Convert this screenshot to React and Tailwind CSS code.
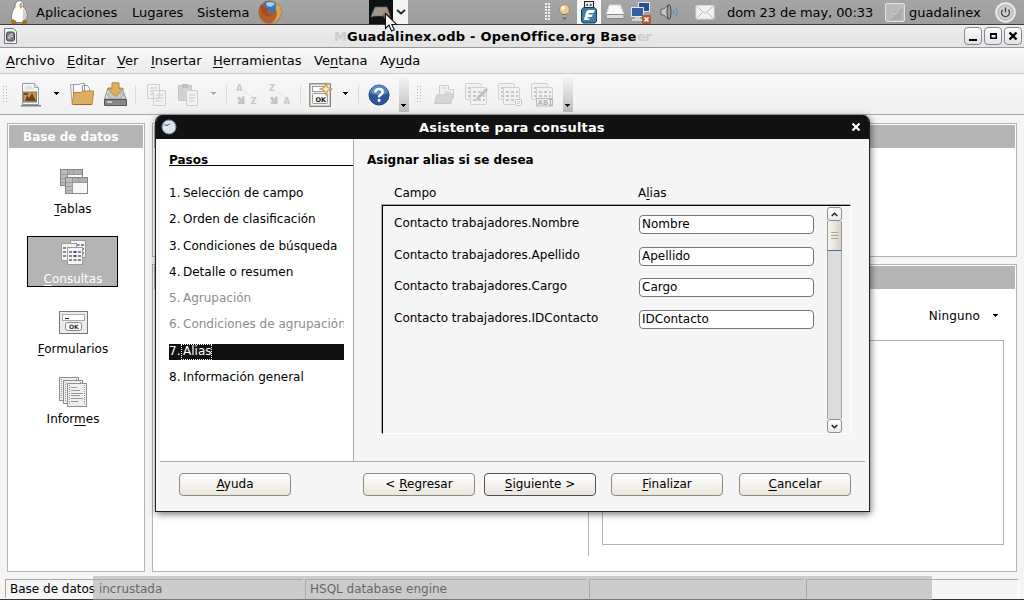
import React from "react";

function Mn({ t, i = -1 }) {
  if (i < 0) return <>{t}</>;
  return (
    <>
      {t.slice(0, i)}
      <span className="underline decoration-1 underline-offset-2">{t[i]}</span>
      {t.slice(i + 1)}
    </>
  );
}

function Arrow({ className = "", fill = "#000" }) {
  return (
    <svg className={"shrink-0 " + className} width="7" height="4" viewBox="0 0 7 4" shapeRendering="crispEdges">
      <path d="M1 0h5v1h-1v1h-1v1h-1v-1h-1v-1h-1z" fill={fill} />
    </svg>
  );
}

function Grip({ className = "" }) {
  return (
    <svg className={"shrink-0 " + className} width="5" height="17" viewBox="0 0 5 17" shapeRendering="crispEdges">
      {[0, 3, 6, 9, 12, 15].map((y) => (
        <g key={y} fill="#b4b4b4">
          <rect x="0" y={y} width="1" height="1" />
          <rect x="3" y={y} width="1" height="1" />
        </g>
      ))}
    </svg>
  );
}

const Sep = ({ className = "" }) => <div className={"h-[19px] w-px shrink-0 bg-[#dadada] " + className} />;

const Overflow = ({ className = "" }) => (
  <div className={"mt-[3px] flex h-[34px] w-[10px] shrink-0 items-end justify-start self-start bg-linear-to-b from-[#f3f3f3] to-[#bdbdbd] pb-[4px] pl-px " + className}>
    <Arrow />
  </div>
);

function Table({ x, y, w = 16, h = 17 }) {
  return (
    <g>
      <rect x={x + 0.5} y={y + 0.5} width={w} height={h} rx="1" fill="#f1f1f1" stroke="#d0d0d0" />
      <path d={`M${x + 3} ${y + 5}h3m2 0h3m2 0h2M${x + 3} ${y + 9}h3m2 0h3m2 0h2M${x + 3} ${y + 13}h3m2 0h3m2 0h2`} stroke="#c6c6c6" strokeWidth="2" />
    </g>
  );
}

function TopPanel() {
  return (
    <div className="flex h-[25px] shrink-0 items-center border-b border-[#3c3c3c] bg-linear-to-b from-[#a6a6a6] to-[#9c9c9c] text-black">
      <svg className="ml-[10px] shrink-0" width="18" height="24" viewBox="0 0 18 24">
        <path d="M9.500 .8C6 .8 5 4 5 7 2 11 .8 16 2 20l4 2.500h7l3-2.500c2-4 1-9-2.500-13 0-3-.5-6.200-4-6.200z" fill="#fdfdfd" stroke="#777" strokeWidth=".9" />
        <path d="M13 8c3 4 4 9 2.500 12L13 21z" fill="#cfcfcf" />
        <path d="M.5 21.500c2-3 4-2.500 6.500 1l-1 1.500H2zM17.500 21.500c-2-3-4-2.500-6 1l1 1.500h4z" fill="#a8741f" />
        <path d="M9 4.500l4.500 1.500-3 3z" fill="#d99b35" />
        <circle cx="11" cy="4" r=".8" fill="#333" />
      </svg>
      <span className="ml-[8px] w-[96px] shrink-0">Aplicaciones</span>
      <span className="w-[65px] shrink-0">Lugares</span>
      <span className="w-[60px] shrink-0">Sistema</span>
      <svg className="shrink-0" width="25" height="24" viewBox="0 0 25 24">
        <circle cx="13" cy="12" r="11.500" fill="#b05f2c" />
        <path d="M14 .5c7 1 11 7 10 13-1 5-5 9-10 10 5-4 7-8 5-14z" fill="#dca44e" />
        <path d="M6 4c3-3 9-4 13-1 1 4-1 9-4 11-2-1-2-3-4-4-1-3-4-3-5-6z" fill="#3b78b5" />
        <path d="M9 3c4-2 7-1 9 1l-4 3-4-1z" fill="#9fd0ec" />
        <path d="M3 6c3-1 5 0 6 2l3 1-2 4 5 2c-2 2-6 2-8-1-2-2-3-5-4-8z" fill="#a34f24" />
      </svg>
      <div className="ml-[87px] flex h-[24px] w-[39px] shrink-0">
        <div className="flex w-[24px] items-center justify-center bg-[#111]">
          <svg width="22" height="16" viewBox="0 0 22 16">
            <path d="M5 3h12l3 8-3 1H5l-4 1 1-3z" fill="#9c9b8b" stroke="#59658a" strokeWidth=".7" />
            <path d="M12 10l5-1 4 4-6 2z" fill="#b05a2c" />
          </svg>
        </div>
        <div className="flex flex-1 items-center justify-center bg-[#f5f5f2]">
          <svg width="10" height="6" viewBox="0 0 10 6"><path d="M1 1l4 3.500 4-3.500" fill="none" stroke="#222" strokeWidth="1.700" /></svg>
        </div>
      </div>
      <svg className="ml-[137px] shrink-0" width="5" height="18" viewBox="0 0 5 18" shapeRendering="crispEdges">
        {[0, 3, 6, 9, 12, 15].map((y) => (
          <g key={y} fill="#f3f3f3"><rect x="0" y={y} width="2" height="2" /><rect x="3" y={y} width="2" height="2" /></g>
        ))}
      </svg>
      <svg className="ml-[8px] shrink-0" width="13" height="18" viewBox="0 0 13 18">
        <circle cx="6.500" cy="6.500" r="5" fill="#e6ce94" stroke="#a88d50" />
        <circle cx="5" cy="5" r="2" fill="#fff6d8" />
        <path d="M4.500 11h4v4L7.500 17h-2l-1-2z" fill="#777" />
        <path d="M4.500 13h4" stroke="#ddd" />
      </svg>
      <div className="ml-[6px] flex h-[24px] w-[24px] shrink-0 items-center justify-center bg-[#f8f8f8]">
        <svg width="18" height="24" viewBox="0 0 18 24">
          <rect x="4.500" y="1.500" width="9" height="7" fill="#e4e4e4" stroke="#222" />
          <path d="M6.500 4h1.500v2H6.500zM10 4h1.500v2H10z" fill="#444" />
          <path d="M3.500 7.500h11l2 2.500v11l-1.500 2h-12l-1.500-2V10z" fill="#3f7da6" stroke="#14384f" />
          <path d="M4 20l2-8 2-2h7l-1.500 3H9l-.5 1.500h4.500L11.500 17H8l-.8 1.500h3L8.500 20z" fill="#fff" />
        </svg>
      </div>
      <svg className="ml-[4px] shrink-0" width="20" height="18" viewBox="0 0 20 18">
        <path d="M4.500 2h11L19 12H1z" fill="#f7f7f7" stroke="#d5d5d5" />
        <rect x="1" y="11.500" width="18" height="4" rx="1" fill="#ddd" stroke="#777" strokeWidth=".8" />
      </svg>
      <svg className="ml-[5px] shrink-0" width="22" height="23" viewBox="0 0 22 23">
        <rect x="8.500" y="1.500" width="11" height="9" fill="#244f93" stroke="#e5e5e5" />
        <rect x="1.500" y="6.500" width="12" height="9" fill="#315fa5" stroke="#e5e5e5" />
        <path d="M2 19h10M5 17h5" stroke="#e5e5e5" strokeWidth="1.500" />
        <rect x="12" y="14" width="9" height="9" rx="1" fill="#b45a35" />
        <path d="M14.500 16.500l4 4m0-4l-4 4" stroke="#fff" strokeWidth="1.600" />
      </svg>
      <svg className="ml-[8px] shrink-0" width="20" height="18" viewBox="0 0 20 18">
        <path d="M1 6h3l4-4v14l-4-4H1z" fill="#c8c8c8" stroke="#666" />
        <ellipse cx="9" cy="9" rx="2" ry="7.500" fill="#999" stroke="#444" />
        <path d="M13 6.500q2 2.500 0 5M15.500 4.500q3.500 4.500 0 9" fill="none" stroke="#5c8fc0" strokeWidth="1.200" />
      </svg>
      <svg className="ml-[15px] shrink-0" width="20" height="15" viewBox="0 0 20 15">
        <rect x="1" y=".5" width="18" height="13.500" rx="1" fill="#f2f2f2" stroke="#dcdcdc" />
        <path d="M1.500 1l8.500 7.500L18.500 1M1.500 13.500l6-6m11 6l-6-6" fill="none" stroke="#bbb" />
      </svg>
      <span className="ml-[12px] w-[159px] shrink-0 tracking-[-0.1px]">dom 23 de may, 00:33</span>
      <svg className="-ml-px shrink-0" width="20" height="19" viewBox="0 0 20 19">
        <rect x=".5" y=".5" width="19" height="18" rx="1.500" fill="#b9bcbc" stroke="#e1e1e1" />
        <path d="M2 17L17 3v14z" fill="#a9adac" />
        <path d="M3 17l4-3 2-3 3-1 2-4 4-3" fill="none" stroke="#d3d4c8" />
      </svg>
      <span className="ml-[4px] w-[86px] shrink-0">guadalinex</span>
      <svg className="shrink-0" width="21" height="21" viewBox="0 0 21 21">
        <circle cx="10.500" cy="10.500" r="9.700" fill="#d6d6d6" stroke="#f5f5f5" strokeWidth="1.200" />
        <circle cx="10.500" cy="10.500" r="7.500" fill="#cdcdcd" stroke="#aaa" strokeWidth=".7" />
        <path d="M7.700 7.700a4 4 0 1 0 5.600 0M10.500 5.500v5" fill="none" stroke="#444" strokeWidth="1.300" />
      </svg>
    </div>
  );
}

function WinBtn({ children }) {
  return (
    <div className="flex size-[18px] items-center justify-center rounded-[4px] border border-[#7f8a96] bg-linear-to-b from-[#fcfcfc] to-[#e3e3e3]">
      <svg width="16" height="16" viewBox="0 0 16 16">{children}</svg>
    </div>
  );
}

function TitleBar() {
  return (
    <div className="flex h-[23px] shrink-0 items-center whitespace-nowrap border-b border-[#989898] bg-linear-to-b from-[#ededed] to-[#e3e3e3]">
      <svg className="ml-[4px] shrink-0" width="13" height="16" viewBox="0 0 13 16">
        <path d="M.5 .5h9l3 3v12H.5z" fill="#f3f3f3" stroke="#777" />
        <rect x="2.500" y="4" width="8" height="9" rx="2" fill="#7b8087" stroke="#43484e" />
        <path d="M4 10q1-4 5-4M5 11q1-3 4-3" stroke="#dadada" fill="none" />
      </svg>
      <span className="ml-[317px] w-[13px] shrink-0 font-bold text-[#cdcdcd]">M</span>
      <span className="w-[290px] shrink-0 font-bold tracking-[0.26px]">Guadalinex.odb - OpenOffice.org Base</span>
      <span className="w-[327px] shrink-0 font-bold tracking-[-0.8px] text-[#cdcdcd]">er</span>
      <div className="flex gap-[2px]">
        <WinBtn><path d="M4 11h8v2H4z" fill="#000" /></WinBtn>
        <WinBtn><path d="M5 5h7v6H5zM6.500 7v2.500h4V7z" fillRule="evenodd" fill="#000" /></WinBtn>
        <WinBtn><path d="M4.500 4.500l7 7m0-7l-7 7" stroke="#000" strokeWidth="2.400" /></WinBtn>
      </div>
    </div>
  );
}

function MenuBar() {
  return (
    <div className="flex h-[26px] shrink-0 items-center border-b border-[#cacaca] bg-linear-to-b from-[#f7f7f7] to-[#ececec] pl-[6px]">
      <span className="w-[61px]"><Mn t="Archivo" i={0} /></span>
      <span className="w-[50px]"><Mn t="Editar" i={0} /></span>
      <span className="w-[34px]"><Mn t="Ver" i={0} /></span>
      <span className="w-[62px]"><Mn t="Insertar" i={0} /></span>
      <span className="w-[101px]"><Mn t="Herramientas" i={0} /></span>
      <span className="w-[66px]"><Mn t="Ventana" i={2} /></span>
      <span><Mn t="Ayuda" i={2} /></span>
    </div>
  );
}

function Toolbar() {
  return (
    <div className="flex h-[41px] shrink-0 items-center border-b border-[#a9a9a9] bg-linear-to-b from-[#f8f8f8] to-[#f0f0f0] pt-px pl-[3px]">
      <Grip />
      <svg className="ml-[12px] shrink-0" width="22" height="26" viewBox="0 0 22 26">
        <path d="M2.500 1.500h12l4 4v17h-16z" fill="#f6f6f6" stroke="#9a9a9a" />
        <path d="M14.500 1.500v4h4" fill="#ddd" stroke="#aaa" />
        <path d="M5 5h7M5 7h8" stroke="#ccc" />
        <rect x="3.500" y="10" width="13" height="10" fill="#cf963f" stroke="#777" />
        <path d="M5 19l2-6 2 3 3-5 4 8zM4 11h4v2H4z" fill="#6b4426" />
        <path d="M1 23h20v1.500H1z" fill="#7d7d7d" />
      </svg>
      <Arrow className="mb-[2px] ml-[11px]" />
      <svg className="ml-[10px] shrink-0" width="25" height="25" viewBox="0 0 25 25">
        <path d="M.5 2.500h7l1 2v16H2z" fill="#f0f0f0" stroke="#aaa" />
        <path d="M3.500 2.500h5l3-1h3v12h-11zM12.500 3.500h5l2 3v8h-7z" fill="#fbfbfb" stroke="#999" />
        <path d="M4 10.500h7l2-1.500h10.500v2l-1.500 11.500H2z" fill="#dcae63" stroke="#b98535" />
        <path d="M4 22.500h18" stroke="#9c6c25" />
      </svg>
      <svg className="ml-[8px] shrink-0" width="25" height="26" viewBox="0 0 25 26">
        <path d="M5 6h14l4 11H1.500z" fill="#dedede" stroke="#929292" />
        <ellipse cx="12.500" cy="13" rx="8" ry="4" fill="#c6c6c6" stroke="#aaa" />
        <path d="M1.500 17.500h22v6h-22z" fill="#868686" stroke="#555" />
        <path d="M4 20h5" stroke="#ddd" strokeWidth="1.500" />
        <path d="M9 .800h7v6h4.500L12.500 14.500 4.500 6.800H9z" fill="#e0b15c" stroke="#b8873b" />
      </svg>
      <Sep className="ml-[7px]" />
      <svg className="ml-[10px] shrink-0" width="21" height="24" viewBox="0 0 21 24">
        <path d="M1.500 1.500h12v14h-12zM7.500 7.500h12v15h-12z" fill="#f2f2f2" stroke="#cfcfcf" />
        <path d="M4 5h7M4 8h3M4 11h3M10 12h7M10 15h7M10 18h5" stroke="#d6d6d6" strokeWidth="1.300" />
      </svg>
      <svg className="ml-[11px] shrink-0" width="21" height="24" viewBox="0 0 21 24">
        <path d="M.5 2.500h13v15H.5z" fill="#d2d2d2" stroke="#c4c4c4" />
        <path d="M4 1h6v4H4z" fill="#bdbdbd" />
        <path d="M8.500 7.500h11v15h-11z" fill="#f2f2f2" stroke="#cfcfcf" />
        <path d="M11 12h6M11 15h6M11 18h5" stroke="#d6d6d6" strokeWidth="1.300" />
      </svg>
      <Arrow className="mb-[2px] ml-[11px]" fill="#a8a8a8" />
      <Sep className="ml-[9px]" />
      {["AZ", "ZA"].map((p, i) => (
        <svg key={p} className={i ? "ml-[11px] shrink-0" : "ml-[9px] shrink-0"} width="22" height="22" viewBox="0 0 22 22">
          <text x="0" y="7" fontFamily="DejaVu Sans" fontSize="8.500" fontWeight="bold" fill="#c8c8c8">{p[0]}</text>
          <text x="14.500" y="20" fontFamily="DejaVu Sans" fontSize="8.500" fontWeight="bold" fill="#c8c8c8">{p[1]}</text>
          <path d="M8 7.500l8 6" stroke="#c8c8c8" strokeDasharray="1 2" />
          <path d="M1 14l2-1.500 3 2.500V12.500h2.500V20H2v-2.500h2z" fill="#c4c4c4" />
        </svg>
      ))}
      <Sep className="ml-[9px]" />
      <svg className="ml-[8px] shrink-0" width="24" height="26" viewBox="0 0 24 26">
        <rect x=".8" y="1.800" width="20.500" height="22.500" fill="#f1f1f1" stroke="#7f7a70" strokeWidth="1.200" />
        <rect x="3.500" y="4.500" width="13" height="5" fill="#fff" stroke="#999" />
        <rect x="3.500" y="11.500" width="15" height="10" rx="1" fill="#f8f8f8" stroke="#999" />
        <text x="6.500" y="19.500" fontFamily="DejaVu Sans" fontSize="6.500" fontWeight="bold" fill="#222">OK</text>
        <path d="M17 1.500l1.500 4L23 7l-4.500 1.500L17 13l-1.500-4.500L11 7l4.500-1.500z" fill="#fff3d5" stroke="#d09a3c" strokeWidth="1.200" />
      </svg>
      <Arrow className="mb-[2px] ml-[9px]" />
      <Sep className="ml-[9px]" />
      <svg className="ml-[9px] shrink-0" width="22" height="22" viewBox="0 0 22 22">
        <circle cx="11" cy="11" r="10" fill="#2a559a" stroke="#1d3e72" />
        <path d="M2 9a9 8 0 0 1 18 0q-9 4-18 0z" fill="#5988c2" />
        <path d="M7.300 8.500q0-3.500 3.700-3.500t3.700 3q0 1.500-2 2.700T11 13.500" fill="none" stroke="#fff" strokeWidth="2.500" />
        <rect x="9.700" y="15" width="2.700" height="2.700" fill="#fff" />
      </svg>
      <Overflow className="ml-[9px]" />
      <Grip className="ml-[8px]" />
      <svg className="ml-[12px] shrink-0" width="22" height="22" viewBox="0 0 22 22">
        <path d="M5.500 1.500h9v4h5v8h-14z" fill="#efefef" stroke="#cfcfcf" />
        <path d="M8 4h5M10 8h7M10 10h7" stroke="#d0d0d0" />
        <path d="M.5 19.500L3 11h8l1-1h7l-2 9.500z" fill="#d6d6d6" stroke="#c9c9c9" />
      </svg>
      <svg className="ml-[9px] shrink-0" width="24" height="24" viewBox="0 0 24 24">
        <Table x={0} y={0} h={16} /><Table x={5} y={4} />
        <path d="M11 18l1-4 9-9 2 2-9 9z" fill="#bdbdbd" />
      </svg>
      <svg className="ml-[9px] shrink-0" width="24" height="24" viewBox="0 0 24 24">
        <Table x={0} y={0} h={16} /><Table x={5} y={4} />
        <rect x="17.500" y="16.500" width="6" height="6" rx="1" fill="#f7f7f7" stroke="#c4c4c4" /><path d="M19 18l3 3m0-3l-3 3" stroke="#bbb" />
      </svg>
      <svg className="ml-[9px] shrink-0" width="23" height="24" viewBox="0 0 23 24">
        <Table x={0} y={0} h={16} /><Table x={5} y={4} />
        <rect x="5.500" y="15.500" width="16" height="7.500" fill="#f1f1f1" stroke="#bbb" />
        <text x="6.500" y="22" fontFamily="DejaVu Sans" fontSize="7" fontWeight="bold" fill="#b5b5b5">AB</text>
        <path d="M18 16.500h3M18 22h3M19.500 16.500V22" stroke="#aaa" />
      </svg>
      <Overflow className="ml-[9px]" />
    </div>
  );
}

function MiniTable({ x, y, w, h }) {
  return (
    <g>
      <rect x={x + 0.5} y={y + 0.5} width={w} height={h} fill="#f8f8f8" stroke="#858585" />
      <path d={`M${x + 1} ${y + 3}h${w - 1}`} stroke="#b0b0b0" strokeWidth="4" />
      <path d={`M${x + 4} ${y + 1}v${h - 1}`} stroke="#bcbcbc" strokeWidth="6" />
      <path d={`M${x + 1} ${y + 5.5}h${w - 1}M${x + 1} ${y + 9.5}h6M${x + 1} ${y + 13.5}h6M${x + 7.5} ${y + 1}v${h - 1}M${x + 13.5} ${y + 1}v4`} stroke="#999" />
    </g>
  );
}

function QueryPage({ x, y, mark }) {
  return (
    <g>
      <rect x={x + 0.5} y={y + 0.5} width="15" height="17" fill="#f4f4f4" stroke="#9b9b9b" />
      {[4, 8, 12].map((d, i) => (
        <g key={d}>
          <rect x={x + 2} y={y + d} width="3" height="2" fill="#888" />
          <rect x={x + 6.5} y={y + d} width="3" height="2" fill={mark && i !== 2 ? "#5c3b9a" : "#888"} />
          <rect x={x + 11} y={y + d} width="3" height="2" fill="#888" />
        </g>
      ))}
    </g>
  );
}

function Page({ x, y, lines }) {
  return (
    <g>
      <rect x={x + 0.5} y={y + 0.5} width="19" height="23" fill="#eee" stroke="#8f8f8f" />
      <path d={`M${x + 2.5} ${y + 2}v20M${x + 17.5} ${y + 2}v20`} stroke="#999" strokeDasharray="1 1" />
      {lines && <path d={`M${x + 4} ${y + 4.5}h6M${x + 4} ${y + 7.5}h9M${x + 4} ${y + 10.5}h12M${x + 4} ${y + 12.5}h9M${x + 4} ${y + 15.5}h12M${x + 4} ${y + 18.5}h7`} stroke="#999" />}
    </g>
  );
}

function SideItem({ icon, t, i, selected }) {
  return (
    <div className={"flex h-[51px] w-[91px] flex-col items-center justify-between pt-px " + (selected ? "border border-black bg-[#b4b4b4] text-white" : "border border-transparent")}>
      <div className="flex h-[32px] items-start justify-center pl-[3px]">{icon}</div>
      <span className="-mb-[2px] pl-px leading-[17px]"><Mn t={t} i={i} /></span>
    </div>
  );
}

function Sidebar() {
  return (
    <div className="flex h-[449px] w-[138px] shrink-0 flex-col border border-[#b3b3b3] bg-white p-px">
      <div className="h-[23px] shrink-0 bg-[#b5b5b5] pl-[14px] font-bold leading-[25px] text-white">Base de datos</div>
      <div className="mt-[18px] ml-[18px] flex flex-col gap-[19px]">
        <SideItem t="Tablas" i={0} icon={
          <svg width="30" height="29" viewBox="0 0 30 29">
            <MiniTable x={1} y={1} w={22} h={16} /><MiniTable x={6} y={9} w={22} h={16} />
          </svg>} />
        <SideItem selected t="Consultas" i={0} icon={
          <svg className="mt-[2px]" width="28" height="29" viewBox="0 0 28 29">
            <QueryPage x={10} y={0} /><QueryPage x={1} y={3} /><QueryPage x={7} y={7} mark />
          </svg>} />
        <SideItem t="Formularios" i={0} icon={
          <svg width="30" height="29" viewBox="0 0 30 29">
            <rect x=".5" y="3.500" width="28" height="22" fill="#ececec" stroke="#777" />
            <rect x="3.500" y="6.500" width="22" height="6" fill="#fff" stroke="#aaa" />
            <path d="M6 10.500h4" stroke="#222" />
            <rect x="6.500" y="14.500" width="16" height="8" rx="2" fill="#f7f7f7" stroke="#888" />
            <text x="10" y="21" fontFamily="DejaVu Sans" fontSize="6" fontWeight="bold" fill="#333">OK</text>
          </svg>} />
        <SideItem t="Informes" i={5} icon={
          <svg className="-mt-px" width="30" height="32" viewBox="0 0 30 32">
            <Page x={0} y={0} /><Page x={4} y={3} /><Page x={8} y={6} lines />
          </svg>} />
      </div>
    </div>
  );
}

function Main() {
  return (
    <div className="flex flex-1 gap-[7px] bg-[#f5f5f5] pt-[8px] pl-[7px] text-[12px]">
      <Sidebar />
      <div className="flex w-[865px] flex-col gap-[7px]">
        <div className="h-[134px] shrink-0 border border-[#b3b3b3] bg-white p-px">
          <div className="h-[23px] bg-[#b5b5b5]" />
        </div>
        <div className="flex h-[308px] shrink-0 flex-col border border-[#b3b3b3] bg-white p-px">
          <div className="h-[23px] shrink-0 bg-[#b5b5b5]" />
          <div className="flex flex-1">
            <div className="h-[267px] w-[435px] border-r border-[#b3b3b3]" />
            <div className="flex flex-1 flex-col pl-[13px]">
              <div className="flex h-[51px] items-center justify-end pt-[2px] pr-[16px]">
                <span className="pt-[2px] tracking-[0.15px]">Ninguno</span>
                <Arrow className="ml-[12px]" />
              </div>
              <div className="h-[205px] w-[402px] border border-[#b5b0b5] bg-white" />
            </div>
          </div>
        </div>
      </div>
    </div>
  );
}

function StatusBar() {
  const cell = "h-[19px] border-t border-l border-[#a9a9a9] border-r border-r-white pl-[4px] leading-[18px]";
  return (
    <div className="relative flex h-[25px] shrink-0 gap-[2px] border-b border-[#333] bg-[#f5f5f5] pt-[4px] pl-[5px] text-[12px]">
      <div className={cell + " w-[298px]"}>Base de datos incrustada</div>
      <div className={cell + " w-[282px]"}>HSQL database engine</div>
      <div className={cell + " w-[215px]"} />
      <div className={cell + " w-[213px]"} />
      <div className="absolute top-px bottom-[-1px] left-[93px] w-[839px] bg-[#adadad]/58" />
    </div>
  );
}

const steps = [
  "Selección de campo", "Orden de clasificación", "Condiciones de búsqueda", "Detalle o resumen",
  "Agrupación", "Condiciones de agrupación", "Alias", "Información general",
];

function Steps() {
  return (
    <div className="w-[198px] shrink-0 border-r border-[#acacac] bg-[linear-gradient(to_right,#f5f5f5_4px,#fff_4px)] pt-[13px] pl-[13px]">
      <div className="h-[14px] border-b border-black font-bold leading-[17px]">
        <span>Pasos</span>
      </div>
      <div className="mt-[20px] flex w-[175px] flex-col gap-[10.3px]">
        {steps.map((s, i) => (
          <div
            key={s}
            className={"flex h-[16px] shrink-0 overflow-hidden whitespace-nowrap leading-[14px] " + (i === 6 ? "bg-[#111] text-white" : i === 4 || i === 5 ? "text-[#8c8c8c]" : "")}
          >
            <span className="w-[13px] shrink-0">{i + 1}.</span>
            <span className={i === 6 ? "-ml-px border border-dotted border-white pl-px leading-[12px]" : "pl-px"}>{s}</span>
          </div>
        ))}
      </div>
    </div>
  );
}

function ScrollBtn({ d }) {
  return (
    <div className="flex h-[14px] w-[15px] shrink-0 items-center justify-center rounded-[3px] border border-[#8d8d8d] bg-linear-to-b from-white to-[#eaeaea]">
      <svg width="7" height="5" viewBox="0 0 7 5"><path d={d} fill="none" stroke="#222" strokeWidth="1.500" /></svg>
    </div>
  );
}

const rows = [
  ["Nombre", "h-[32px]"],
  ["Apellido", "h-[31px]"],
  ["Cargo", "h-[32px]"],
  ["IDContacto", "h-[32px]"],
];

function AliasPane() {
  return (
    <div className="flex flex-1 flex-col">
      <div className="mt-[13px] ml-[13px] font-bold leading-[17px]">Asignar alias si se desea</div>
      <div className="mt-[16px] flex pl-[40px] leading-[17px]">
        <span className="w-[244px]">Campo</span>
        <span><Mn t="Alias" i={1} /></span>
      </div>
      <div className="mt-[3px] ml-[28px] flex h-[229px] w-[469px] border border-t-black border-r-white border-b-white border-l-black shadow-[-1px_-1px_0_#aaa]">
        <div className="w-[444px] pt-[6px] pl-[11px]">
          {rows.map(([n, h]) => (
            <div key={n} className={"flex items-start " + h}>
              <span className="w-[245px] shrink-0 pt-[3px] leading-[17px]">Contacto trabajadores.{n}</span>
              <div className="mt-[3px] h-[19px] w-[175px] rounded-[4px] border border-[#777] bg-white pl-[2px] leading-[16px]">{n}</div>
            </div>
          ))}
        </div>
        <div className="flex w-[15px] flex-col pt-px">
          <ScrollBtn d="M.7 4l2.800-2.800L6.300 4" />
          <div className="flex h-[30px] flex-col items-center justify-center gap-[2px] border border-t-0 border-[#9b978f] border-b-[#4470a0] bg-linear-to-r from-[#f8f6f1] to-[#d6d2c8]">
            <div className="h-px w-[7px] bg-[#aaa69c]" />
            <div className="h-px w-[7px] bg-[#aaa69c]" />
            <div className="h-px w-[7px] bg-[#aaa69c]" />
          </div>
          <div className="flex-1 border-x border-[#a3a3a3] bg-[#dbdbdc]" />
          <ScrollBtn d="M.7 1l2.800 2.800L6.300 1" />
        </div>
      </div>
    </div>
  );
}

function Btn({ t, i, className, strong }) {
  return (
    <div className={"h-[23px] w-[112px] shrink-0 rounded-[4px] border bg-linear-to-b from-white to-[#e9e6df] text-center leading-[20px] " + (strong ? "border-[#55514b] " : "border-[#8f887b] ") + className}>
      <Mn t={t} i={i} />
    </div>
  );
}

function Dialog() {
  return (
    <div className="absolute top-[115px] left-[155px] flex h-[397px] w-[715px] flex-col overflow-hidden rounded-t-[7px] border border-t-0 border-[#1b2030] bg-[#f5f5f5] text-[12px] shadow-[1px_2px_7px_rgba(0,0,0,0.55)]">
      <div className="flex h-[24px] shrink-0 items-center bg-[#121212]">
        <svg className="ml-[5px] shrink-0" width="16" height="16" viewBox="0 0 16 16">
          <circle cx="8" cy="8" r="7" fill="#dfe3ec" stroke="#6e89b5" />
          <path d="M2 6q2-1 4 0 2-2 4-1-3 0-4 2-1-1-4-1z" fill="#222" />
        </svg>
        <span className="ml-[242px] w-[432px] shrink-0 text-[13px] font-bold tracking-[0.17px] text-white">Asistente para consultas</span>
        <svg width="10" height="10" viewBox="0 0 10 10"><path d="M1.500 1.500l7 7m0-7l-7 7" stroke="#fff" strokeWidth="2.200" /></svg>
      </div>
      <div className="flex h-[322px] shrink-0">
        <Steps />
        <AliasPane />
      </div>
      <div className="mr-[4px] ml-[4px] flex flex-1 border-t border-[#acacac] pt-[11px] pl-[19px]">
        <Btn t="Ayuda" i={0} className="" />
        <Btn t="< Regresar" i={2} className="ml-[72px]" />
        <Btn t="Siguiente >" i={0} className="ml-[9px]" strong />
        <Btn t="Finalizar" i={0} className="ml-[15px]" />
        <Btn t="Cancelar" i={0} className="ml-[16px]" />
      </div>
    </div>
  );
}

export default function App() {
  return (
    <div className="relative flex h-[600px] w-[1024px] flex-col overflow-hidden bg-[#f5f5f5] font-['DejaVu_Sans',sans-serif] text-[13px] leading-[17px] text-black">
      <TopPanel />
      <TitleBar />
      <MenuBar />
      <Toolbar />
      <Main />
      <StatusBar />
      <Dialog />
      <svg className="absolute top-[12px] left-[384px]" width="14" height="20" viewBox="0 0 14 20">
        <path d="M1.500 1.500v15l3.500-3.500 2.500 6 2.800-1.200-2.500-5.300h5z" fill="#fff" stroke="#111" strokeWidth="1.100" />
      </svg>
    </div>
  );
}
